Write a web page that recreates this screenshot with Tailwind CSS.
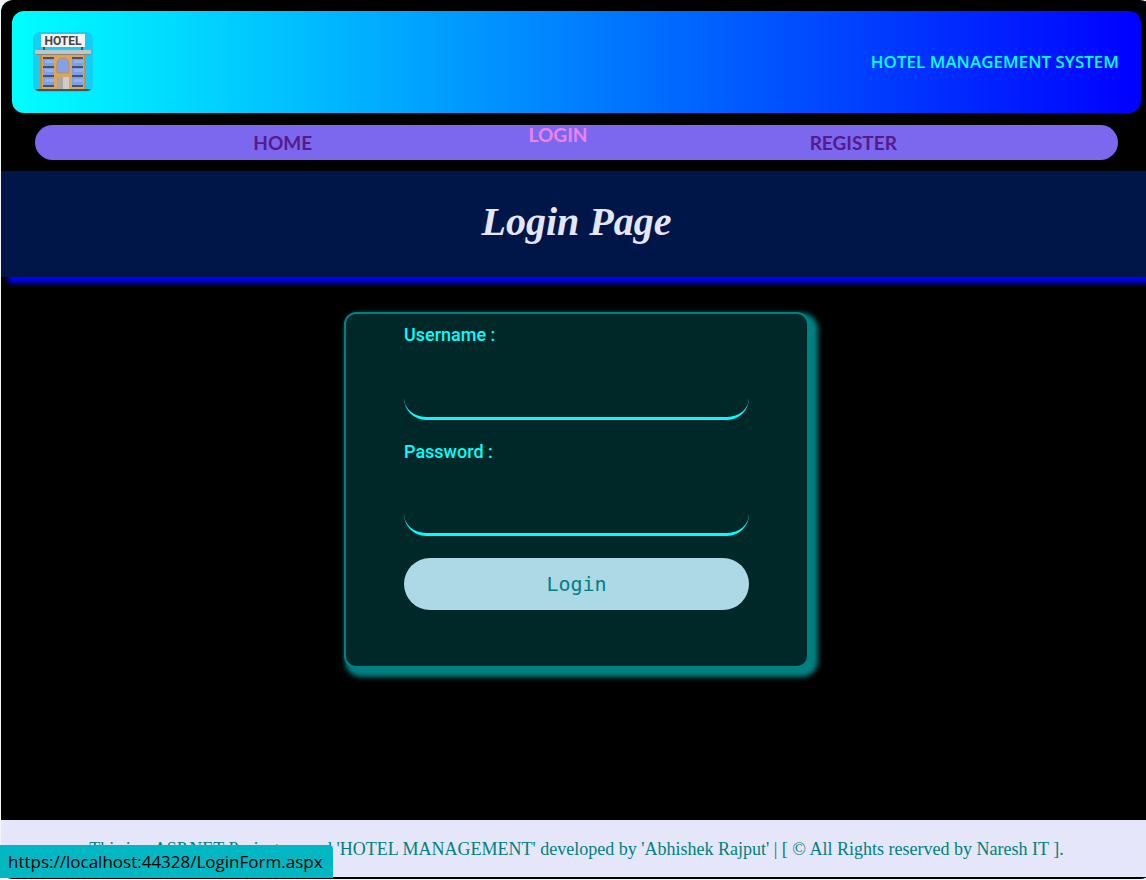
<!DOCTYPE html>
<html lang="en" class="overflow-hidden">
<head>
<meta charset="utf-8">
<title>Login Page</title>
<script src="https://cdn.jsdelivr.net/npm/@tailwindcss/browser@4"></script>
</head>
<body class="bg-[#f3f6f8]">
<div class="ml-px -mr-1.5 flex min-h-[calc(100vh-1px)] flex-col rounded-xl bg-black pb-0.5 pt-[11px]">
  <header class="mx-[11px] flex h-[102px] items-center justify-between rounded-xl bg-linear-to-r/srgb from-[#00ffff] to-[#0000ff] pl-[21px] pr-[22px]">
    <svg class="size-[60px]" viewBox="0 0 60 60" role="img" aria-label="Hotel">
      <rect width="60" height="60" rx="7" fill="#16cdf3"/>
      <path d="M11 14v5M49 14v5" stroke="#46545c" stroke-width="2"/>
      <rect x="8" y="2" width="44" height="13" fill="#f4f4f4"/>
      <text x="30" y="13" text-anchor="middle" font-family="Roboto" font-weight="700" font-size="12" fill="#444">HOTEL</text>
      <path d="M7 21h46v36H7z" fill="#dba45f"/>
      <path d="M7 21h2v36H7zM51 21h2v36h-2z" fill="#c98b49"/>
      <path d="M2 18h56v4H2z" fill="#b9c6ca"/>
      <path d="M3 22h54v1H3z" fill="#8d8175"/>
      <path d="M10 25h11v30H10zM39 25h11v30H39z" fill="#4a5262"/>
      <path d="M10 27h11v7H10zM10 36h11v7H10zM10 45h11v8H10zM39 27h11v7H39zM39 36h11v7H39zM39 45h11v8H39z" fill="#7d9fe4"/>
      <path d="M12 28h9v3h-9zM12 37h9v3h-9zM12 47h9v3h-9zM41 28h9v3h-9zM41 37h9v3h-9zM41 47h9v3h-9z" fill="#92b2ee"/>
      <path d="M24 41V32q0-6 6-6t6 6v9z" fill="#81a3e6" stroke="#c18b55"/>
      <path d="M24 45h6v12h-6z" fill="#aaa7a3"/><path d="M30 45h6v12h-6z" fill="#cfccc5"/>
      <path d="M2 57h56q-1 2-3 2H5q-2 0-3-2z" fill="#425460"/>
    </svg>
    <p class="font-['Open_Sans'] text-[17px] font-semibold text-[#00ffff]">HOTEL MANAGEMENT SYSTEM</p>
  </header>
  <nav class="mx-[34px] mt-3 flex h-[35px] items-center justify-evenly rounded-full bg-[#7b68ee] pt-0.5 text-center font-['Lato'] text-[19px] font-bold text-[#551a8b]">
    <a href="#home" class="w-14">HOME</a>
    <a href="#login" class="w-[61px] pb-4 text-[#ee82ee]">LOGIN</a>
    <a href="#register" class="w-[93px]">REGISTER</a>
  </nav>
  <section class="mt-[11px] flex h-[106px] items-center justify-center bg-[#001548] pb-1 shadow-[8px_5px_5px_1px_#0000ff]">
    <h1 class="font-['Liberation_Serif'] text-[40px] font-bold italic leading-none text-[#e6e6fa]">Login Page</h1>
  </section>
  <main class="mb-8 mt-[35px] flex justify-center">
    <form class="flex w-[465px] flex-col rounded-xl border-2 border-[#008080] bg-[#002828] px-[58px] pb-14 pt-[9px] shadow-[5px_5px_5px_4px_#008080]">
      <label for="user" class="font-['Roboto'] text-lg leading-6 font-medium text-[#00ffff]">Username :</label>
      <input id="user" type="text" class="mt-[21px] h-[52px] rounded-[22px] border-b-3 border-[#00ffff] bg-transparent px-4 text-lg text-[#00ffff] outline-none">
      <label for="pass" class="mt-5 font-['Roboto'] text-lg leading-6 font-medium text-[#00ffff]">Password :</label>
      <input id="pass" type="password" class="mt-5 h-[52px] rounded-[22px] border-b-3 border-[#00ffff] bg-transparent px-4 text-lg text-[#00ffff] outline-none">
      <button type="button" class="mt-[22px] h-[52px] rounded-full bg-[#add8e6] font-['DejaVu_Sans_Mono'] text-xl text-[#008080]">Login</button>
    </form>
  </main>
  <footer class="mt-auto flex h-[57px] items-center justify-center bg-[#e6e6fa] font-['Liberation_Serif'] text-lg text-[#008080]">
    <p class="whitespace-nowrap">This is a ASP.NET Project named 'HOTEL MANAGEMENT' developed by 'Abhishek Rajput' | [ © All Rights reserved by Naresh IT ].</p>
  </footer>
</div>
<div class="fixed bottom-0.5 left-0 flex h-[33px] items-center rounded-tr bg-[#00b7c3] pl-2 pr-2.5 font-['Open_Sans'] text-[17px] text-black">https://localhost:44328/LoginForm.aspx</div>
</body>
</html>
